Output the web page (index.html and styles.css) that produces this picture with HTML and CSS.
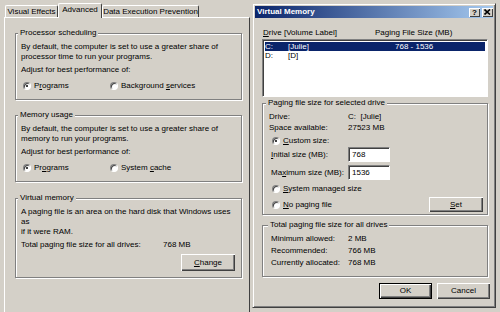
FILE: index.html
```html
<!DOCTYPE html>
<html lang="en">

<head>
  <meta charset="UTF-8">
  <meta name="viewport" content="width=device-width, initial-scale=1.0">
  <title>Performance Options - Virtual Memory</title>
  <link rel="stylesheet" href="styles.css">
</head>

<body>
  <div class="props">
    <div class="tabs">
      <span class="tab tab-ve">Visual Effects</span>
      <span class="tab tab-adv active">Advanced</span>
      <span class="tab tab-dep">Data Execution Prevention</span>
    </div>

    <div class="panel">
      <fieldset class="group">
        <legend>Processor scheduling</legend>
        <p class="text">By default, the computer is set to use a greater share of<br>processor time to run your programs.</p>
        <p class="text adjust">Adjust for best performance of:</p>
        <div class="choices">
          <label class="opt"><span class="radio on"></span><span>P<u>r</u>ograms</span></label>
          <label class="opt"><span class="radio"></span><span>Background <u>s</u>ervices</span></label>
        </div>
      </fieldset>

      <fieldset class="group">
        <legend>Memory usage</legend>
        <p class="text">By default, the computer is set to use a greater share of<br>memory to run your programs.</p>
        <p class="text adjust">Adjust for best performance of:</p>
        <div class="choices">
          <label class="opt"><span class="radio on"></span><span>Pr<u>o</u>grams</span></label>
          <label class="opt"><span class="radio"></span><span>System <u>c</u>ache</span></label>
        </div>
      </fieldset>

      <fieldset class="group vm">
        <legend>Virtual memory</legend>
        <p class="text">A paging file is an area on the hard disk that Windows uses as<br>if it were RAM.</p>
        <div class="total">
          <span>Total paging file size for all drives:</span>
          <span>768 MB</span>
        </div>
        <div class="actions">
          <button class="btn btn-change"><u>C</u>hange</button>
        </div>
      </fieldset>
    </div>
  </div>

  <div class="dialog">
    <div class="titlebar">
      <span class="title">Virtual Memory</span>
      <span class="tbtn">?</span>
      <span class="tbtn">
        <svg width="7" height="6" viewBox="0 0 7 6">
          <path d="M0.5 0.5 L6 5.5 M6 0.5 L0.5 5.5" stroke="#000" stroke-width="1.6" />
        </svg>
      </span>
    </div>

    <div class="dlg-body">
      <div class="list-head">
        <span><u>D</u>rive</span>
        <span>[Volume Label]</span>
        <span>Paging File Size (MB)</span>
      </div>
      <div class="listbox">
        <div class="row sel"><span>C:</span><span>[Julie]</span><span>768 - 1536</span></div>
        <div class="row"><span>D:</span><span>[D]</span><span></span></div>
      </div>

      <fieldset class="group drive-group">
        <legend>Paging file size for selected drive</legend>
        <div class="kv"><span>Drive:</span><span>C:&nbsp;&nbsp;[Julie]</span></div>
        <div class="kv"><span>Space available:</span><span>27523 MB</span></div>
        <label class="opt opt-custom"><span class="radio on"></span><span><u>C</u>ustom size:</span></label>
        <div class="field-row first">
          <span><u>I</u>nitial size (MB):</span>
          <input class="field" type="text" value="768" readonly>
        </div>
        <div class="field-row">
          <span>Ma<u>x</u>imum size (MB):</span>
          <input class="field" type="text" value="1536" readonly>
        </div>
        <label class="opt opt-system"><span class="radio"></span><span><u>S</u>ystem managed size</span></label>
        <div class="last-row">
          <label class="opt"><span class="radio"></span><span><u>N</u>o paging file</span></label>
          <button class="btn btn-set"><u>S</u>et</button>
        </div>
      </fieldset>

      <fieldset class="group total-group">
        <legend>Total paging file size for all drives</legend>
        <div class="kv2"><span>Minimum allowed:</span><span>2 MB</span></div>
        <div class="kv2"><span>Recommended:</span><span>766 MB</span></div>
        <div class="kv2"><span>Currently allocated:</span><span>768 MB</span></div>
      </fieldset>

      <div class="dlg-buttons">
        <button class="btn btn-ok">OK</button>
        <button class="btn btn-cancel">Cancel</button>
      </div>
    </div>
  </div>
</body>

</html>
```

FILE: styles.css
```css
* {
  box-sizing: border-box;
}

body {
  margin: 0;
  width: 500px;
  height: 312px;
  overflow: hidden;
  position: relative;
  background-color: #d4d0c8;
  font-family: "Liberation Sans", Arial, sans-serif;
  font-size: 8px;
  line-height: 10px;
  color: #000;
}

u {
  text-decoration-thickness: 1px;
}

/* left window: performance options, advanced tab */
.props {
  padding: 3px 0 0 4px;
  width: 250px;
}

.tabs {
  display: flex;
  align-items: flex-end;
  height: 14px;
  padding-left: 1px;
}

.tab {
  height: 12px;
  line-height: 11px;
  text-align: center;
  border: 1px solid;
  border-color: #fff #404040 transparent #fff;
  border-bottom: none;
  border-radius: 2px 2px 0 0;
  background-color: #d4d0c8;
}

.tab-ve {
  width: 53px;
}

.tab-adv {
  width: 44px;
}

.tab-dep {
  width: 97px;
}

.tab.active {
  height: 15px;
  margin-bottom: -1px;
  line-height: 12px;
  position: relative;
  z-index: 1;
}

.panel {
  height: 300px;
  border-top: 1px solid #fff;
  border-left: 1px solid #fff;
  border-right: 1px solid #404040;
  padding: 10px 0 0 10px;
}

fieldset {
  margin: 0;
  min-inline-size: 0;
}

.group {
  border: 1px solid #808080;
  box-shadow: 1px 1px 0 #fff, inset 1px 1px 0 #fff;
}

.group legend {
  padding: 0 2px;
  margin-left: -3px;
  background-color: #d4d0c8;
  line-height: 10px;
}

.panel .group {
  width: 227px;
  padding: 4px 6px 8px 5px;
}

.panel .group + .group {
  margin-top: 10px;
}

.panel .group.vm {
  margin-top: 11px;
  padding-bottom: 6px;
}

.text {
  margin: 0;
}

.adjust {
  margin-top: 3px;
}

.choices {
  display: grid;
  grid-template-columns: 87px auto;
  margin-top: 6px;
  padding-left: 2px;
}

.opt {
  display: flex;
  align-items: center;
  gap: 3px;
  height: 10px;
}

.radio {
  position: relative;
  flex: none;
  width: 8px;
  height: 8px;
  border-radius: 50%;
  background-color: #fff;
  border: 1px solid;
  border-color: #808080 #fff #fff #808080;
  box-shadow: inset 1px 1px 0 #404040;
}

.radio.on::after {
  content: "";
  position: absolute;
  left: 2px;
  top: 2px;
  width: 2px;
  height: 2px;
  border-radius: 50%;
  background-color: #000;
}

.total {
  display: grid;
  grid-template-columns: 142px auto;
  margin-top: 3px;
}

.actions {
  display: flex;
  justify-content: flex-end;
  margin-top: 4px;
}

.btn {
  font: inherit;
  color: #000;
  padding: 0;
  border: none;
  background-color: #d4d0c8;
  box-shadow: inset 1px 1px 0 #fff, inset -1px -1px 0 #404040, inset -2px -2px 0 #808080;
  text-align: center;
}

.btn-change {
  width: 54px;
  height: 17px;
}

/* virtual memory dialog, floating over the tab page */
.dialog {
  position: absolute;
  left: 252px;
  top: 3px;
  width: 244px;
  height: 305px;
  padding: 2px;
  background-color: #d4d0c8;
  border: 1px solid;
  border-color: #d4d0c8 #404040 #404040 #d4d0c8;
  box-shadow: inset 1px 1px 0 #fff, inset -1px -1px 0 #808080;
}

.titlebar {
  display: flex;
  align-items: center;
  gap: 2px;
  height: 12px;
  padding: 0 0 0 2px;
  background: linear-gradient(to right, #0a246a, #a6caf0);
  color: #fff;
  font-weight: bold;
}

.title {
  flex: 1;
}

.tbtn {
  display: flex;
  align-items: center;
  justify-content: center;
  width: 11px;
  height: 9px;
  background-color: #d4d0c8;
  box-shadow: inset 1px 1px 0 #fff, inset -1px -1px 0 #404040;
  color: #000;
  font-size: 8px;
  line-height: 9px;
}

.dlg-body {
  padding: 10px 3px 0 7px;
}

.list-head {
  display: grid;
  grid-template-columns: 21px 91px auto;
  padding-left: 1px;
}

.listbox {
  height: 58px;
  margin: 1px 2px 0 0;
  padding: 2px;
  background-color: #fff;
  border: 1px solid;
  border-color: #808080 #fff #fff #808080;
  box-shadow: inset 1px 1px 0 #404040;
}

.row {
  display: grid;
  grid-template-columns: 23px 107px auto;
  line-height: 9px;
}

.row.sel {
  background-color: #0a246a;
  color: #fff;
}

.drive-group {
  margin: 1px 2px 0 0;
  padding: 3px 4px 2px 6px;
}

.total-group {
  margin: 5px 2px 0 0;
  padding: 3px 4px 7px 8px;
}

.kv {
  display: grid;
  grid-template-columns: 79px auto;
  line-height: 11px;
}

.opt-custom {
  margin: 3px 0 0 3px;
}

.field-row {
  display: grid;
  grid-template-columns: 77px 42px;
  align-items: center;
  height: 15px;
  margin: 3px 0 0 2px;
}

.field-row.first {
  margin-top: 1px;
}

.field {
  width: 42px;
  height: 15px;
  padding: 0 0 0 3px;
  font: inherit;
  color: #000;
  background-color: #fff;
  border: 1px solid;
  border-color: #808080 #fff #fff #808080;
  box-shadow: inset 1px 1px 0 #404040;
  outline: none;
}

.opt-system {
  margin: 4px 0 0 3px;
}

.last-row {
  display: flex;
  align-items: center;
  justify-content: space-between;
  height: 15px;
  margin-top: 3px;
  padding-left: 3px;
}

.btn-set {
  width: 54px;
  height: 15px;
}

.kv2 {
  display: grid;
  grid-template-columns: 77px auto;
  line-height: 12px;
}

.dlg-buttons {
  display: flex;
  justify-content: flex-end;
  gap: 5px;
  margin-top: 6px;
}

.btn-ok,
.btn-cancel {
  width: 53px;
  height: 16px;
}

.btn-ok {
  border: 1px solid #000;
}
```
